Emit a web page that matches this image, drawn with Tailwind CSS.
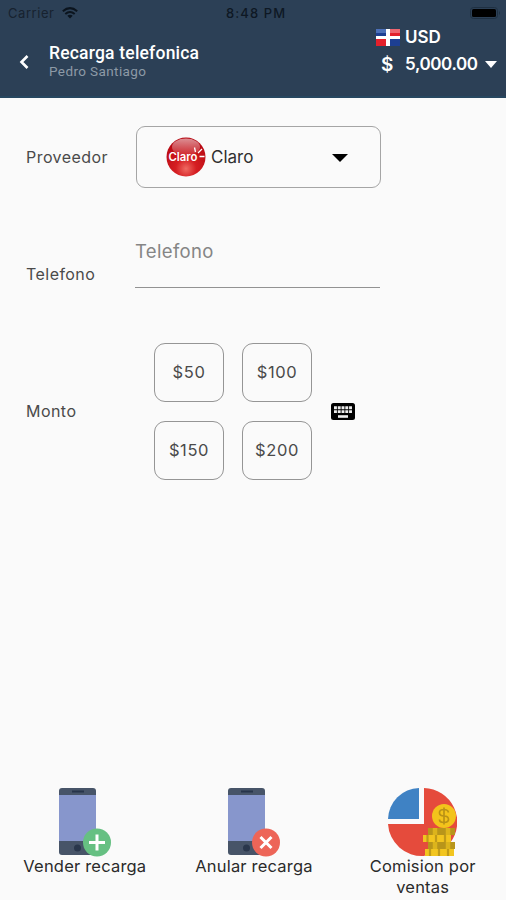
<!DOCTYPE html>
<html lang="es">
<head>
<meta charset="utf-8">
<title>Recarga telefonica</title>
<script src="https://cdn.jsdelivr.net/npm/@tailwindcss/browser@4"></script>
</head>
<body class="w-[506px] h-[900px] overflow-hidden bg-[#fafafa] font-[Inter,sans-serif] text-[#4a4a4a] flex flex-col">
<header class="h-[98px] shrink-0 bg-[#2c4056] border-b-2 border-[#274760] text-white">
  <div class="h-[26px] flex items-center text-[13px] leading-[26px]">
    <span class="w-[54px] ml-2 tracking-[0.55px] text-[#17222f]">Carrier</span>
    <svg class="w-4 h-3 -mt-px" viewBox="0 0 16 12" fill="none" stroke="#0b141e" stroke-width="2"><path d="M.8 4.2Q8-2 15.2 4.2M3.3 7Q8 2.900 12.700 7"/><path d="M8 11.500 5.300 8.800Q8 6.800 10.700 8.800Z" fill="#0b141e" stroke="none"/></svg>
    <span class="ml-[148px] font-medium tracking-[1.1px] text-[#0e1824]">8:48 PM</span>
    <svg class="ml-auto mr-[5px] w-[31px] h-[12px]" viewBox="0 0 31 12"><rect x=".5" y=".5" width="27" height="11" rx="3" fill="none" stroke="#1f3042"/><rect x="2" y="2" width="24" height="8" rx="1.500" fill="#000"/><path d="M29 4q2 2 0 4" fill="#1f3042"/></svg>
  </div>
  <div class="h-[70px] flex">
    <svg class="w-[10px] h-[16px] ml-[19px] mt-[28px]" viewBox="0 0 10 16" fill="none" stroke="#fff" stroke-width="2.600"><path d="M8.500 2 2.500 8l6 6"/></svg>
    <div class="ml-[20px] mt-[17px] w-[180px] font-[Roboto,sans-serif]">
      <div class="text-[17.5px] leading-5 font-medium tracking-[0.2px] whitespace-nowrap">Recarga telefonica</div>
      <div class="text-[13.5px] leading-[17px] tracking-[0.4px] text-[#8d9aa6] whitespace-nowrap">Pedro Santiago</div>
    </div>
    <div class="ml-auto w-[131px] pt-[1px] font-semibold text-[17px]">
      <div class="flex items-center h-[21px]">
        <svg class="w-6 h-[17px] ml-px" viewBox="0 0 24 17"><rect width="24" height="17" fill="#fff"/><path d="M0 0h10v7H0zM14 10h10v7H14z" fill="#1d3f92"/><path d="M0 0h10v4H0z" fill="#4c70b8"/><path d="M14 0h10v7H14zM0 10h10v7H0z" fill="#e3202b"/><path d="M14 0h10v4H14z" fill="#ee6670"/></svg>
        <span class="ml-[5px] leading-[21px]">USD</span>
      </div>
      <div class="flex items-center h-[27px] mt-[3px] leading-[27px]">
        <span class="ml-[6px] w-6 text-[19px]">$</span>
        <span class="w-[75px] whitespace-nowrap tracking-[-0.4px]">5,000.00</span>
        <svg class="ml-[5px] w-3 h-[7px]" viewBox="0 0 12 7"><path d="M0 0h12L6 7z" fill="#fff"/></svg>
      </div>
    </div>
  </div>
</header>
<main class="flex-1 flex flex-col text-[16px] tracking-[0.45px]">
  <section class="mt-7 h-[62px] flex items-center">
    <div class="w-[110px] ml-[26px]">Proveedor</div>
    <div class="w-[245px] h-[62px] border border-[#a5a5a5] rounded-[9px] flex items-center">
      <svg class="w-10 h-10 ml-[29px]" viewBox="0 0 40 40">
        <defs><radialGradient id="ball" cx=".5" cy=".8" r=".75"><stop offset="0" stop-color="#ef6a62"/><stop offset=".35" stop-color="#d51e22"/><stop offset="1" stop-color="#b50711"/></radialGradient><linearGradient id="gloss" x2="0" y2="1"><stop stop-color="#fff" stop-opacity=".55"/><stop offset="1" stop-color="#fff" stop-opacity=".06"/></linearGradient></defs>
        <circle cx="20" cy="20" r="19.500" fill="url(#ball)"/><ellipse cx="20" cy="10" rx="14" ry="8.500" fill="url(#gloss)"/>
        <text x="2.500" y="24" textLength="29" lengthAdjust="spacingAndGlyphs" font-family="Inter" font-weight="600" font-size="11.500" letter-spacing="0" fill="#fff">Claro</text>
        <path d="M29.500 15 28.500 10.500M32 16 36 12M33.500 19.500h5" stroke="#fff" stroke-width="1.300"/>
      </svg>
      <span class="ml-[5px] mt-[2px] text-[17px] tracking-[0px] text-[#303030]">Claro</span>
      <svg class="ml-auto mr-[32px] w-4 h-2 mt-px" viewBox="0 0 16 8"><path d="M0 0h16L8 8z" fill="#000"/></svg>
    </div>
  </section>
  <section class="mt-[43px] h-[57px] flex">
    <div class="w-[109px] ml-[26px] pt-[31px]">Telefono</div>
    <div class="w-[245px] h-[57px] border-b border-[#929292] pt-[7px] text-[18.5px] tracking-[0.35px] text-[#858585]">Telefono</div>
  </section>
  <section class="mt-[54px] h-[138px] flex items-center">
    <div class="w-[128px] ml-[26px]">Monto</div>
    <div class="grid grid-cols-2 gap-x-[18px] gap-y-[19px] w-[158px] text-center text-[16.5px] leading-[57px] tracking-[0.6px]">
      <div class="h-[59px] border border-[#959595] rounded-[11px]">$50</div>
      <div class="h-[59px] border border-[#959595] rounded-[11px]">$100</div>
      <div class="h-[59px] border border-[#959595] rounded-[11px]">$150</div>
      <div class="h-[59px] border border-[#959595] rounded-[11px]">$200</div>
    </div>
    <svg class="ml-[19px] w-6 h-[17px]" viewBox="0 0 24 17"><rect width="24" height="17" rx="2.500" fill="#000"/><path d="M3 4.800h18M3 8.600h18" stroke="#eee" stroke-width="2.900" stroke-dasharray="2.900 .87"/><path d="M7 13.500h10" stroke="#eee" stroke-width="2.600"/></svg>
  </section>
  <nav class="mt-auto h-[113px] grid grid-cols-3 text-center text-[16.5px] leading-[21px] tracking-[0.2px] text-[#2a2a2a]">
    <div class="flex flex-col items-center">
      <svg class="w-[52px] h-[70px] ml-px" viewBox="0 0 52 70"><rect x="0" y="1" width="37" height="67" rx="3" fill="#475468"/><path d="M0 8h37v46H0z" fill="#8796cc"/><path d="M13 4.500h12" stroke="#27344a" stroke-width="2"/><circle cx="18.500" cy="61" r="3.500" fill="#2a374c"/><circle cx="38" cy="55.500" r="14" fill="#66c082"/><path d="M30 55.500h16M38 47.500v16" stroke="#fff" stroke-width="3"/></svg>
      <span class="ml-px -mt-px whitespace-nowrap">Vender recarga</span>
    </div>
    <div class="flex flex-col items-center">
      <svg class="w-[52px] h-[70px] ml-[3px]" viewBox="0 0 52 70"><rect x="0" y="1" width="37" height="67" rx="3" fill="#475468"/><path d="M0 8h37v46H0z" fill="#8796cc"/><path d="M13 4.500h12" stroke="#27344a" stroke-width="2"/><circle cx="18.500" cy="61" r="3.500" fill="#2a374c"/><circle cx="38" cy="55.500" r="14" fill="#ed6558"/><path d="m32.500 50 11 11m0-11-11 11" stroke="#fff" stroke-width="3"/></svg>
      <span class="ml-[2px] -mt-px whitespace-nowrap">Anular recarga</span>
    </div>
    <div class="flex flex-col items-center">
      <svg class="w-[70px] h-[70px]" viewBox="0 0 70 70"><path d="M32 1v31H1A32 32 0 0 1 32 1z" fill="#3f82c4"/><path d="M37 1a34 34 0 0 1 26 55L37 69A34 34 0 0 1 1 37h36z" fill="#e54b3c"/><path d="M41 41h27v7H41zM41 55h27v7H41z" fill="#b8951a"/><path d="M36 48h28v7H36zM38 62h29v7H38z" fill="#f2c51f"/><path d="M48 41v7M61 41v7M48 55v7M61 55v7" stroke="#dcb41c" stroke-width="4.500"/><path d="M40.500 48v7M49 48v7M58 48v7M43 62v7M52 62v7M61 62v7" stroke="#c19b18" stroke-width="2.200"/><circle cx="57" cy="29" r="12" fill="#f3c31b"/><path d="M61.500 25.500q-.7-3-4.500-3-4.500 0-4.500 3.200t4.500 3.300 4.500 3.300-4.500 3.200-4.500-3M57 20.500v17" stroke="#ba9216" stroke-width="1.700" fill="none"/></svg>
      <span class="ml-[2px] -mt-px">Comision por<br>ventas</span>
    </div>
  </nav>
</main>
</body>
</html>
